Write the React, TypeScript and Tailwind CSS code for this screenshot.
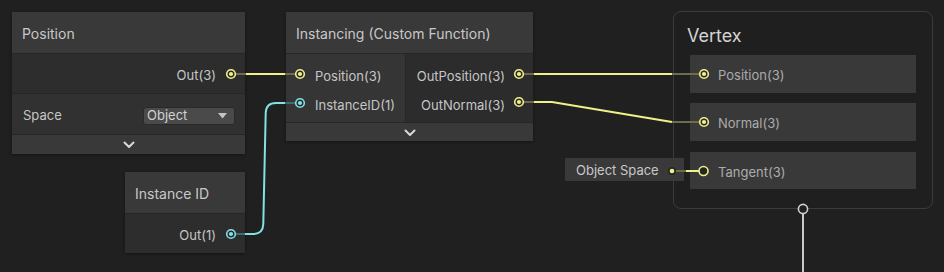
import React from "react";

const YELLOW = "#f1f18c";
const YELLOW_DIM = "#6d6d4c";
const CYAN = "#80e1e6";
const CYAN_DIM = "#3f6c6e";

function Chevron() {
  return (
    <svg width="12" height="8" viewBox="0 0 12 8" fill="none">
      <path d="M1.5 1.5 6 6l4.5-4.5" stroke="#d8d8d8" strokeWidth="2" strokeLinecap="round" strokeLinejoin="round" />
    </svg>
  );
}

function Port({ x, y, color }: { x: number; y: number; color: string }) {
  return (
    <g>
      <circle cx={x} cy={y} r={4.3} fill="#2a2a2a" stroke={color} strokeWidth={1.6} />
      <circle cx={x} cy={y} r={2.1} fill={color} />
    </g>
  );
}

function NodeHeader({ title }: { title: string }) {
  return (
    <div className="h-[42px] bg-[#393939] flex items-center px-[10px] pt-[1px] text-[14px] text-[#c8c8c8] border-b border-[#262626]">
      {title}
    </div>
  );
}

function Wires() {
  return (
    <svg className="absolute inset-0 pointer-events-none" width="944" height="272" fill="none">
      {/* Position -> Instancing */}
      <path d="M231 74H246" stroke={YELLOW_DIM} strokeWidth="2" />
      <path d="M246 74H285" stroke={YELLOW} strokeWidth="2" />
      <path d="M285 74H300" stroke={YELLOW_DIM} strokeWidth="2" />

      {/* Instance ID -> InstanceID */}
      <path d="M231 234H245" stroke={CYAN_DIM} strokeWidth="2" />
      <path d="M245 234H253Q263 234 263.3 224L265.7 113Q266 103 276 103H285" stroke={CYAN} strokeWidth="2" />
      <path d="M285 103H300" stroke={CYAN_DIM} strokeWidth="2" />

      {/* OutPosition -> Vertex Position */}
      <path d="M519 74H534" stroke={YELLOW_DIM} strokeWidth="2" />
      <path d="M534 74H672" stroke={YELLOW} strokeWidth="2" />
      <path d="M672 74H704" stroke={YELLOW_DIM} strokeWidth="2" />

      {/* OutNormal -> Vertex Normal */}
      <path d="M519 102H534" stroke={YELLOW_DIM} strokeWidth="2" />
      <path d="M534 102H552L672 122" stroke={YELLOW} strokeWidth="2" />
      <path d="M672 122H704" stroke={YELLOW_DIM} strokeWidth="2" />

      {/* Object Space -> Tangent */}
      <path d="M675 171H686" stroke={YELLOW_DIM} strokeWidth="2" />
      <path d="M686 171H699" stroke={YELLOW} strokeWidth="2" />
      <circle cx="672" cy="171" r="4" fill="#262626" />
      <circle cx="672" cy="171" r="2.3" fill={YELLOW} />
      <circle cx="703.5" cy="171" r="4.5" fill="#262626" stroke={YELLOW} strokeWidth="1.6" />

      {/* Vertex -> Fragment */}
      <path d="M803 214V272" stroke="#c9c9c9" strokeWidth="2" />
      <circle cx="803" cy="209" r="4.6" fill="#202020" stroke="#cfcfcf" strokeWidth="1.6" />

      <Port x={231} y={74} color={YELLOW} />
      <Port x={300} y={74} color={YELLOW} />
      <Port x={300} y={103} color={CYAN} />
      <Port x={231} y={234} color={CYAN} />
      <Port x={519} y={74} color={YELLOW} />
      <Port x={519} y={102} color={YELLOW} />
      <Port x={704} y={74} color={YELLOW} />
      <Port x={704} y={122} color={YELLOW} />
    </svg>
  );
}

export default function App() {
  return (
    <div className="relative w-[944px] h-[272px] overflow-hidden bg-[#202020] font-['Inter','Noto_Sans',sans-serif]">
      {/* Position node */}
      <div className="absolute left-[12px] top-[12px] w-[233px] shadow-[0_1px_3px_rgba(0,0,0,0.4)]">
        <NodeHeader title="Position" />
        <div className="h-[39px] bg-[#2d2d2d] flex items-center justify-end pr-[29px] pt-[5px] text-[13px] text-[#c6c6c6]">
          Out(3)
        </div>
        <div className="h-[41px] bg-[#313131] border-t border-[#262626] flex items-center justify-between pl-[11px] pr-[10px] pt-[4px] text-[13px] text-[#c6c6c6]">
          <span>Space</span>
          <div className="w-[92px] h-[18px] rounded-[3px] bg-[#4a4a4a] border border-[#2a2a2a] flex items-center justify-between pl-[3px] pr-[7px] text-[#d2d2d2]">
            <span>Object</span>
            <svg width="9" height="6" viewBox="0 0 9 6">
              <path d="M0 0h9L4.5 5.5z" fill="#c4c4c4" />
            </svg>
          </div>
        </div>
        <div className="h-[20px] bg-[#393939] border-t border-[#262626] flex items-center justify-center pt-[1px]">
          <Chevron />
        </div>
      </div>

      {/* Instancing (Custom Function) */}
      <div className="absolute left-[286px] top-[12px] w-[247px] shadow-[0_1px_3px_rgba(0,0,0,0.4)]">
        <NodeHeader title="Instancing (Custom Function)" />
        <div className="flex h-[68px] text-[13px] text-[#c6c6c6]">
          <div className="w-[119px] bg-[#353535] pt-[6px] pl-[29px] flex flex-col">
            <div className="h-[29px] flex items-center pt-[5px]">Position(3)</div>
            <div className="h-[29px] flex items-center pt-[5px]">InstanceID(1)</div>
          </div>
          <div className="flex-1 bg-[#2c2c2c] border-l border-[#262626] pt-[6px] pr-[28px] flex flex-col items-end">
            <div className="h-[29px] flex items-center pt-[5px]">OutPosition(3)</div>
            <div className="h-[29px] flex items-center pt-[5px]">OutNormal(3)</div>
          </div>
        </div>
        <div className="h-[19px] bg-[#393939] border-t border-[#262626] flex items-center justify-center pt-[1px]">
          <Chevron />
        </div>
      </div>

      {/* Instance ID */}
      <div className="absolute left-[125px] top-[172px] w-[120px] shadow-[0_1px_3px_rgba(0,0,0,0.4)]">
        <NodeHeader title="Instance ID" />
        <div className="h-[39px] bg-[#2d2d2d] flex items-center justify-end pr-[29px] pt-[5px] text-[13px] text-[#c6c6c6]">
          Out(1)
        </div>
      </div>

      {/* Vertex context */}
      <div className="absolute left-[673px] top-[11px] w-[260px] h-[198px] rounded-[8px] border border-[#3b3b3b] bg-[#1f1f1f] px-[16px] flex flex-col">
        <div className="h-[43px] flex items-center pt-[4px] text-[18px] text-[#d4d4d4]">
          <span className="ml-[-3px]">Vertex</span>
        </div>
        <div className="flex flex-col gap-[10px] text-[13px] text-[#ababab]">
          <div className="h-[38px] bg-[#393939] flex items-center pl-[28px] pt-[4px]">Position(3)</div>
          <div className="h-[38px] bg-[#393939] flex items-center pl-[28px] pt-[4px]">Normal(3)</div>
          <div className="h-[37px] bg-[#393939] flex items-center pl-[28px] pt-[5px] mt-[1px]">Tangent(3)</div>
        </div>
      </div>

      {/* Object Space default value */}
      <div className="absolute left-[565px] top-[158px] w-[119px] h-[23px] bg-[#393939] flex items-center pl-[11px] pt-[3px] text-[13px] text-[#c8c8c8]">
        Object Space
      </div>

      <Wires />
    </div>
  );
}
